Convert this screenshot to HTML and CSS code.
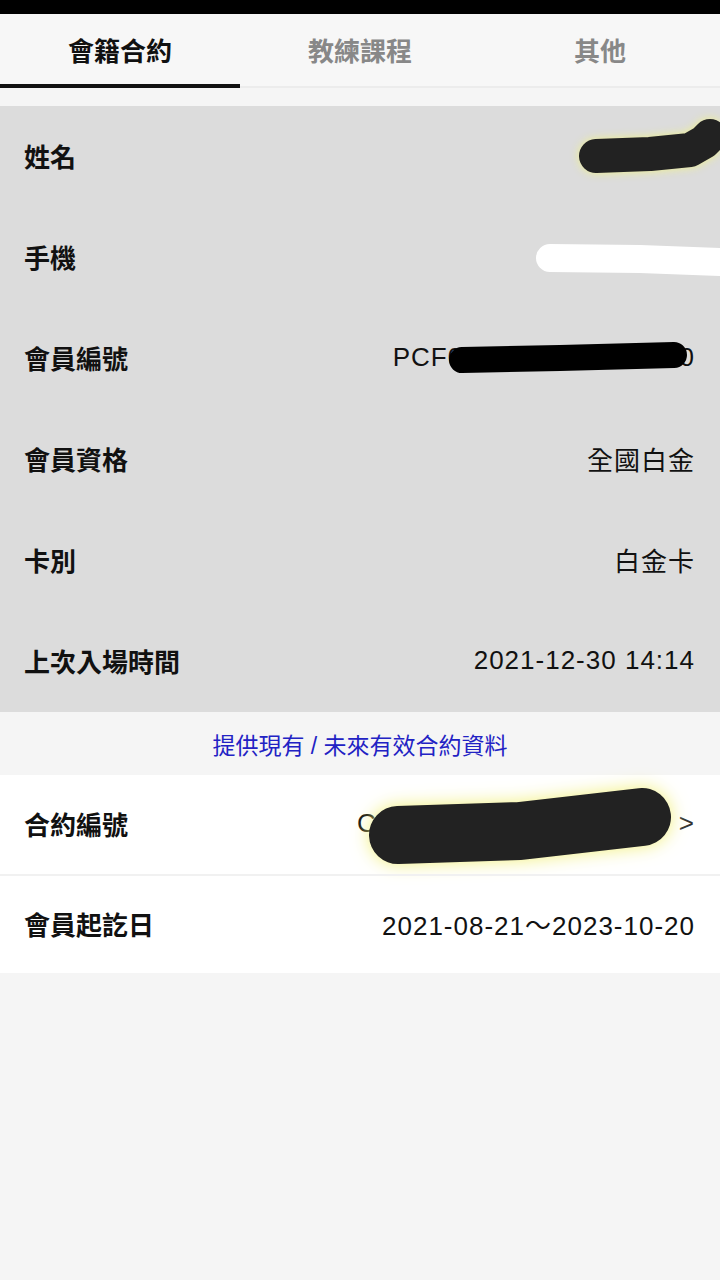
FILE: index.html
```html
<!DOCTYPE html>
<html>
<head>
    <meta charset="UTF-8">
    <title>會籍合約</title>
    <link rel="stylesheet" href="styles.css">
</head>
<body>
    <div class="status-bar"></div>

    <div class="tabs">
        <div class="tab active">會籍合約</div>
        <div class="tab">教練課程</div>
        <div class="tab">其他</div>
    </div>

    <div class="spacer"></div>

    <div class="info">
        <div class="row">
            <span class="label">姓名</span>
            <span class="value"></span>
            <svg class="mark glow" viewBox="0 0 720 101">
                <path d="M596 50 L650 48 L690 44 L704 36 L710 30" stroke="#222" stroke-width="34" stroke-linecap="round" stroke-linejoin="round" fill="none"/>
            </svg>
        </div>
        <div class="row">
            <span class="label">手機</span>
            <span class="value"></span>
            <svg class="mark" viewBox="0 0 720 101">
                <path d="M550 51 L640 52 L720 55" stroke="#fff" stroke-width="28" stroke-linecap="round" fill="none"/>
            </svg>
        </div>
        <div class="row">
            <span class="label">會員編號</span>
            <span class="value">PCF0000000000000000</span>
            <svg class="mark" viewBox="0 0 720 101">
                <path d="M462 52 L560 50 L674 47" stroke="#000" stroke-width="26" stroke-linecap="round" fill="none"/>
            </svg>
        </div>
        <div class="row">
            <span class="label">會員資格</span>
            <span class="value">全國白金</span>
        </div>
        <div class="row">
            <span class="label">卡別</span>
            <span class="value">白金卡</span>
        </div>
        <div class="row">
            <span class="label">上次入場時間</span>
            <span class="value">2021-12-30 14:14</span>
        </div>
    </div>

    <div class="note">提供現有 / 未來有效合約資料</div>

    <div class="contract">
        <div class="row">
            <span class="label">合約編號</span>
            <span class="value">C0000000000000000000 <span class="chevron">&gt;</span></span>
            <svg class="mark glow-big" viewBox="0 0 720 99">
                <path d="M398 60 L520 56 L642 42" stroke="#222" stroke-width="58" stroke-linecap="round" stroke-linejoin="round" fill="none"/>
            </svg>
        </div>
        <div class="row">
            <span class="label">會員起訖日</span>
            <span class="value">2021-08-21～2023-10-20</span>
        </div>
    </div>
</body>
</html>
```

FILE: styles.css
```css
body {
    margin: 0;
    background-color: #f5f5f5;
    font-family: "Liberation Sans", "Noto Sans CJK TC", sans-serif;
    color: #111;
}
.status-bar {
    height: 14px;
    background-color: #000;
}
.tabs {
    display: flex;
    height: 72px;
    background-color: #f7f7f7;
    border-bottom: 2px solid #ececec;
}
.tab {
    flex: 1;
    display: flex;
    align-items: center;
    justify-content: center;
    font-size: 26px;
    font-weight: bold;
    color: #888;
    border-bottom: 4px solid transparent;
    margin-bottom: -2px;
}
.tab.active {
    color: #111;
    border-bottom-color: #111;
}
.spacer {
    height: 18px;
}
.info {
    background-color: #dcdcdc;
}
.row {
    position: relative;
    display: flex;
    align-items: center;
    justify-content: space-between;
    height: 101px;
    padding: 0 25px 3px 24px;
    box-sizing: border-box;
    font-size: 26px;
}
.label {
    font-weight: bold;
}
.value {
    letter-spacing: 1px;
}
.mark {
    position: absolute;
    left: 0;
    top: 0;
    width: 720px;
    height: 100%;
    pointer-events: none;
}
.glow {
    filter: drop-shadow(0 0 5px #eef08a);
}
.glow-big {
    filter: drop-shadow(0 0 9px #f2f07c);
}
.note {
    height: 63px;
    display: flex;
    align-items: center;
    justify-content: center;
    font-size: 23px;
    color: #2222c4;
}
.contract {
    background-color: #fff;
}
.contract .row {
    height: 99px;
}
.contract .row + .row {
    border-top: 2px solid #f1f1f1;
}
.chevron {
    color: #333;
}
```
